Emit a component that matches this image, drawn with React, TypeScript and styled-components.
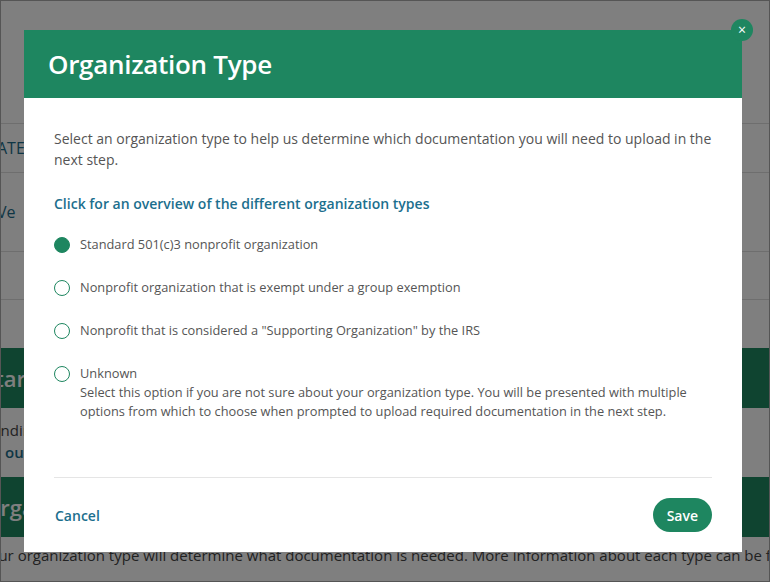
import styled, { createGlobalStyle } from "styled-components";

const Global = createGlobalStyle`
  html, body { margin: 0; padding: 0; }
  body { font-family: "Open Sans", "DejaVu Sans", sans-serif; color: #444; background: #fff; }
`;

const options = [
  { label: "Standard 501(c)3 nonprofit organization", checked: true },
  { label: "Nonprofit organization that is exempt under a group exemption" },
  { label: 'Nonprofit that is considered a "Supporting Organization" by the IRS' },
  {
    label: "Unknown",
    note: "Select this option if you are not sure about your organization type. You will be presented with multiple options from which to choose when prompted to upload required documentation in the next step.",
  },
];

const App = () => {
  return (
    <Frame>
      <Global />
      <Page>
        <PageRow h={122} />
        <PageRow h={48}><RowText>ATE</RowText></PageRow>
        <PageRow h={78}><RowText>Ve</RowText></PageRow>
        <PageRow h={47} />
        <PageRow h={48} />
        <GreenBar>Start</GreenBar>
        <PlainText>Finding</PlainText>
        <LinkText>our</LinkText>
        <Spacer h={16} />
        <GreenBar>Organization Type</GreenBar>
        <Footnote>Your organization type will determine what documentation is needed. More information about each type can be found in the</Footnote>
      </Page>
      <Overlay />
      <Modal>
        <Header>
          <Title>Organization Type</Title>
        </Header>
        <Close>×</Close>
        <Body>
          <Intro>
            Select an organization type to help us determine which documentation you will need to upload in the next step.
          </Intro>
          <Overview>Click for an overview of the different organization types</Overview>
          <Options>
            {options.map((o) => (
              <Option key={o.label}>
                <Radio checked={!!o.checked} />
                <div>
                  <OptionLabel>{o.label}</OptionLabel>
                  {o.note && <OptionNote>{o.note}</OptionNote>}
                </div>
              </Option>
            ))}
          </Options>
        </Body>
        <Footer>
          <Cancel>Cancel</Cancel>
          <Save>Save</Save>
        </Footer>
      </Modal>
    </Frame>
  );
};

const Frame = styled.div`
  position: relative;
  width: 770px;
  height: 582px;
  overflow: hidden;
  border: 1px solid #555;
  box-sizing: border-box;
`;

const Page = styled.div`
  display: flex;
  flex-direction: column;
`;

const PageRow = styled.div<{ h: number }>`
  height: ${(p) => p.h}px;
  border-bottom: 1px solid #ddd;
  display: flex;
  align-items: center;
`;

const RowText = styled.span`
  font-size: 16px;
  color: #1d6d8a;
  margin-left: -4px;
`;

const GreenBar = styled.div`
  height: 60px;
  background: #1e8860;
  color: #fff;
  font-size: 22px;
  font-weight: 600;
  display: flex;
  align-items: center;
  margin-left: -18px;
  margin-top: -1px;
`;

const PlainText = styled.div`
  font-size: 15px;
  margin: 12px 0 0 -12px;
`;

const LinkText = styled.div`
  font-size: 15px;
  color: #1d6d8a;
  font-weight: 600;
  margin: 2px 0 0 4px;
`;

const Spacer = styled.div<{ h: number }>`
  height: ${(p) => p.h}px;
`;

const Footnote = styled.div`
  font-size: 15px;
  white-space: nowrap;
  margin: 8px 0 0 -20px;
`;

const Overlay = styled.div`
  position: absolute;
  inset: 0;
  background: rgba(0, 0, 0, 0.5);
`;

const Modal = styled.div`
  position: absolute;
  left: 23px;
  top: 29px;
  width: 718px;
  height: 522px;
  background: #fff;
  display: flex;
  flex-direction: column;
`;

const Header = styled.div`
  height: 68px;
  background: #1e8660;
  display: flex;
  align-items: center;
  padding: 0 24px;
`;

const Title = styled.h1`
  margin: 0;
  color: #fff;
  font-size: 26px;
  font-weight: 600;
  letter-spacing: -0.3px;
`;

const Close = styled.div`
  position: absolute;
  right: -11px;
  top: -11px;
  width: 22px;
  height: 22px;
  border-radius: 50%;
  background: #1e8660;
  color: #fff;
  font-size: 14px;
  line-height: 21px;
  text-align: center;
`;

const Body = styled.div`
  flex: 1;
  padding: 30px 30px 0 30px;
`;

const Intro = styled.p`
  margin: 0;
  font-size: 14px;
  line-height: 21px;
  color: #555;
`;

const Overview = styled.a`
  display: block;
  margin-top: 24px;
  color: #1c6f8e;
  font-size: 14px;
  font-weight: 600;
`;

const Options = styled.div`
  margin-top: 23px;
  display: flex;
  flex-direction: column;
  gap: 26px;
`;

const Option = styled.div`
  display: flex;
  gap: 10px;
  align-items: flex-start;
`;

const Radio = styled.span<{ checked: boolean }>`
  flex: none;
  width: 14px;
  height: 14px;
  border-radius: 50%;
  border: 1.5px solid #1e8660;
  background: ${(p) => (p.checked ? "#1e8660" : "#fff")};
  margin-top: 1px;
`;

const OptionLabel = styled.div`
  font-size: 12.8px;
  color: #555;
  line-height: 17px;
`;

const OptionNote = styled.div`
  font-size: 12.8px;
  color: #555;
  line-height: 19px;
  margin-top: 1px;
  padding-right: 20px;
`;

const Footer = styled.div`
  margin: 0 30px;
  border-top: 1px solid #e5e5e5;
  height: 74px;
  display: flex;
  align-items: center;
  justify-content: space-between;
`;

const Cancel = styled.a`
  color: #1c6f8e;
  font-size: 14px;
  font-weight: 600;
  margin-left: 1px;
`;

const Save = styled.button`
  all: unset;
  background: #1e8660;
  color: #fff;
  font-size: 14px;
  font-weight: 600;
  height: 34px;
  padding: 0 14px;
  border-radius: 17px;
  font-family: "Open Sans", sans-serif;
`;

export default App;
